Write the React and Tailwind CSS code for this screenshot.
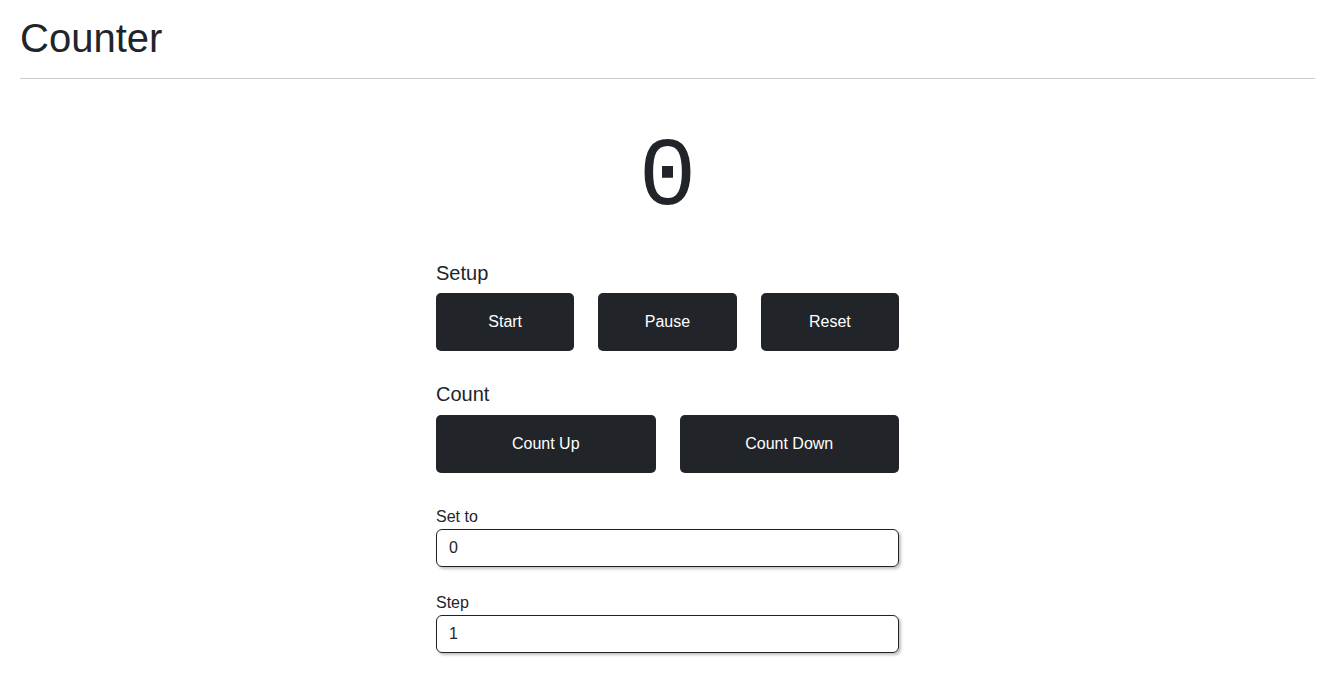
export default function App() {
	return (
		<div className="min-h-screen bg-white pl-5 pr-[26px] text-[#212529] font-['Liberation_Sans',Arial,sans-serif]">
			{/* Header */}
			<h1 className="pt-[13px] pb-[15px] text-[40px] leading-[50px] border-b border-[#cccccc]">
				Counter
			</h1>

			<div className="mx-auto w-[463px]">
				{/* Display */}
				<div className="mt-[40px] text-center text-[96px] leading-[120px] font-['Liberation_Mono',monospace]">
					0
				</div>

				{/* Setup */}
				<div className="mt-[22px] text-[20px] leading-6">Setup</div>
				<div className="mt-[8px] grid grid-cols-3 gap-6">
					{["Start", "Pause", "Reset"].map((label) => (
						<button
							key={label}
							className="h-[58px] rounded-[5px] bg-[#212529] text-white text-base"
						>
							{label}
						</button>
					))}
				</div>

				{/* Count */}
				<div className="mt-[31px] text-[20px] leading-6">Count</div>
				<div className="mt-[9px] grid grid-cols-2 gap-6">
					{["Count Up", "Count Down"].map((label) => (
						<button
							key={label}
							className="h-[58px] rounded-[5px] bg-[#212529] text-white text-base"
						>
							{label}
						</button>
					))}
				</div>

				{/* Inputs */}
				<label className="mt-[34px] block text-base leading-5">Set to</label>
				<input
					type="text"
					defaultValue="0"
					className="mt-[2px] block h-[38px] w-full rounded-[6px] border border-[#222] px-3 text-base shadow-[2px_2px_3px_rgba(0,0,0,0.25)] outline-none"
				/>

				<label className="mt-[26px] block text-base leading-5">Step</label>
				<input
					type="text"
					defaultValue="1"
					className="mt-[2px] block h-[38px] w-full rounded-[6px] border border-[#222] px-3 text-base shadow-[2px_2px_3px_rgba(0,0,0,0.25)] outline-none"
				/>
			</div>
		</div>
	);
}
